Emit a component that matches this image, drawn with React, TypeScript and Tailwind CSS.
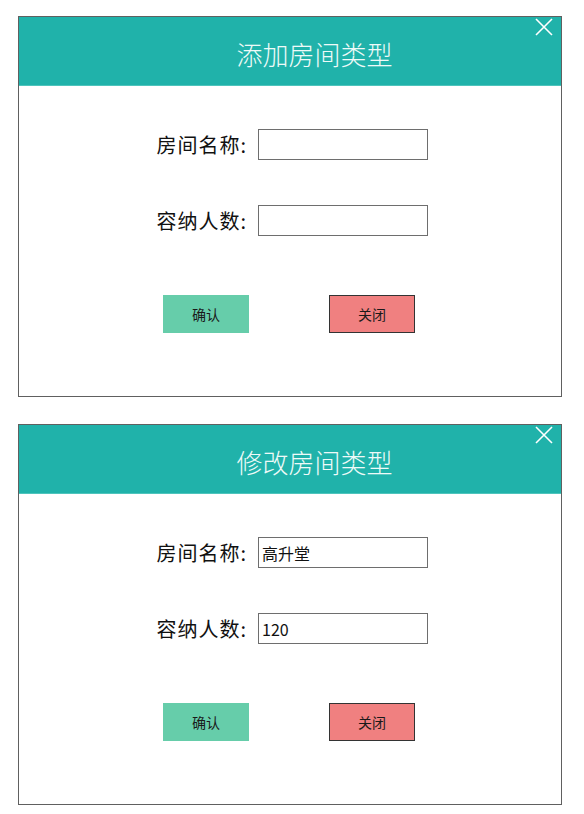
import React from 'react';

const font = { fontFamily: '"Noto Sans CJK SC", "Noto Sans", sans-serif' };

type RoomTypeDialogProps = {
  title: string;
  name?: string;
  capacity?: string;
};

function CloseIcon() {
  return (
    <svg width="18" height="18" viewBox="0 0 18 18" className="absolute right-[8px] top-[1px]">
      <path d="M1 1 L17 17 M17 1 L1 17" stroke="#ffffff" strokeWidth="1.6" fill="none" />
    </svg>
  );
}

function FormRow({ label, value }: { label: string; value?: string }) {
  return (
    <div className="flex items-center pl-[128px]">
      <label className="flex w-[100px] justify-end text-[20px] leading-none tracking-[1px] text-[#111]">
        {label}
      </label>
      <input
        readOnly
        value={value ?? ''}
        className="ml-[11px] h-[31px] w-[170px] border border-[#6e6e6e] bg-white px-[3px] text-[16px] text-[#111] outline-none"
      />
    </div>
  );
}

function RoomTypeDialog({ title, name, capacity }: RoomTypeDialogProps) {
  return (
    <div className="relative flex h-[381px] w-[544px] flex-col border border-[#606060] bg-white">
      <div className="relative flex h-[69px] items-center justify-center border-b border-[#4ec4bc] bg-[#20b2aa] pl-[49px] pt-[6px]">
        <h2 className="text-[26px] font-light leading-none text-[#eefaf8]">{title}</h2>
        <CloseIcon />
      </div>
      <div className="flex flex-col pt-[43px]">
        <FormRow label="房间名称:" value={name} />
        <div className="h-[45px]" />
        <FormRow label="容纳人数:" value={capacity} />
      </div>
      <div className="flex gap-[80px] pl-[144px] pt-[59px]">
        <button className="h-[38px] w-[86px] bg-[#66cdaa] text-[14px] text-[#1a1a1a]">确认</button>
        <button className="h-[38px] w-[86px] border border-[#333] bg-[#f08080] text-[14px] text-[#1a1a1a]">
          关闭
        </button>
      </div>
    </div>
  );
}

export default function App() {
  return (
    <div className="flex min-h-[814px] flex-col gap-[27px] bg-white pl-[18px] pt-[16px]" style={font}>
      <RoomTypeDialog title="添加房间类型" />
      <RoomTypeDialog title="修改房间类型" name="高升堂" capacity="120" />
    </div>
  );
}
